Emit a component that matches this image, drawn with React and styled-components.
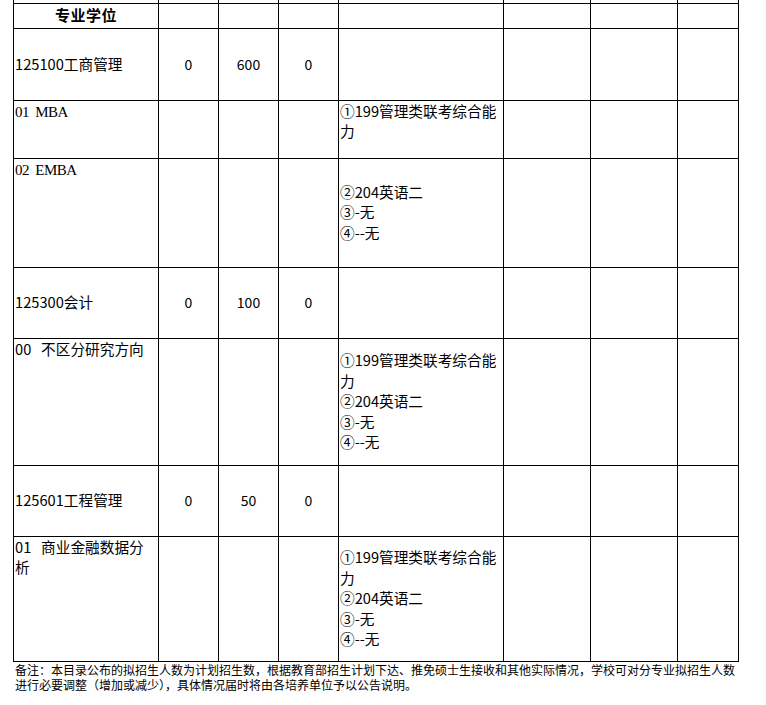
import React from "react";
import styled, { createGlobalStyle } from "styled-components";

const GlobalStyle = createGlobalStyle`
  html, body {
    margin: 0;
    padding: 0;
    background: #ffffff;
  }
  body {
    font-family: "Noto Sans CJK SC", "Liberation Sans", sans-serif;
    color: #000000;
  }
`;

const Page = styled.div`
  padding-left: 13px;
  width: 740px;
`;

const Table = styled.table`
  border-collapse: collapse;
  table-layout: fixed;
  width: 725px;
`;

const Row = styled.tr`
  height: ${(props) => props.$h}px;
`;

const Cell = styled.td`
  border: 1px solid #000000;
  border-top: ${(props) => (props.$open ? "none" : "1px solid #000000")};
  padding: ${(props) => (props.$open ? "0" : "0 1px")};
  font-size: 14.67px;
  line-height: 20.5px;
  text-align: ${(props) => (props.$center ? "center" : "left")};
  vertical-align: ${(props) => (props.$top ? "top" : "middle")};
  word-break: break-all;
  overflow: hidden;
`;

const HeadText = styled.span`
  font-weight: bold;
  font-size: 15px;
  letter-spacing: 0.5px;
`;

const Code = styled.span`
  font-family: "Liberation Serif", "DejaVu Serif", serif;
  font-size: 15px;
  letter-spacing: -0.5px;
  word-spacing: 3px;
`;

const Num = styled.span`
  font-size: 14px;
`;

const Note = styled.div`
  width: 722px;
  padding-left: 2px;
  font-size: 12px;
  line-height: 15px;
  font-family: "Noto Sans CJK SC", sans-serif;
`;

const widths = [145, 60, 60, 60, 165, 87, 87, 61];

const exams = ["②204英语二", "③-无", "④--无"];

const ExamLines = ({ full }) => (
  <>
    {full && <div>①199管理类联考综合能力</div>}
    {exams.map((e) => (
      <div key={e}>{e}</div>
    ))}
  </>
);

const Empty = ({ n = 3 }) =>
  Array.from({ length: n }).map((_, i) => <Cell key={i} />);

const MajorRow = ({ h, code, name, a, b, c }) => (
  <Row $h={h}>
    <Cell>
      {code}
      {name}
    </Cell>
    <Cell $center>
      <Num>{a}</Num>
    </Cell>
    <Cell $center>
      <Num>{b}</Num>
    </Cell>
    <Cell $center>
      <Num>{c}</Num>
    </Cell>
    <Empty n={4} />
  </Row>
);

const App = () => {
  return (
    <Page>
      <GlobalStyle />
      <Table>
        <colgroup>
          {widths.map((w, i) => (
            <col key={i} style={{ width: w }} />
          ))}
        </colgroup>
        <tbody>
          <Row $h={3}>
            {widths.map((_, i) => (
              <Cell key={i} $open />
            ))}
          </Row>
          <Row $h={25}>
            <Cell $center>
              <HeadText>专业学位</HeadText>
            </Cell>
            <Empty n={7} />
          </Row>
          <MajorRow h={72} code="125100" name="工商管理" a="0" b="600" c="0" />
          <Row $h={58}>
            <Cell $top>
              <Code>01 MBA</Code>
            </Cell>
            <Empty n={3} />
            <Cell $top>①199管理类联考综合能力</Cell>
            <Empty n={3} />
          </Row>
          <Row $h={109}>
            <Cell $top>
              <Code>02 EMBA</Code>
            </Cell>
            <Empty n={3} />
            <Cell>
              <ExamLines />
            </Cell>
            <Empty n={3} />
          </Row>
          <MajorRow h={71} code="125300" name="会计" a="0" b="100" c="0" />
          <Row $h={127}>
            <Cell $top>{"00\u00a0\u00a0\u00a0不区分研究方向"}</Cell>
            <Empty n={3} />
            <Cell>
              <ExamLines full />
            </Cell>
            <Empty n={3} />
          </Row>
          <MajorRow h={71} code="125601" name="工程管理" a="0" b="50" c="0" />
          <Row $h={125}>
            <Cell $top>{"01\u00a0\u00a0\u00a0商业金融数据分析"}</Cell>
            <Empty n={3} />
            <Cell>
              <ExamLines full />
            </Cell>
            <Empty n={3} />
          </Row>
        </tbody>
      </Table>
      <Note>
        备注：本目录公布的拟招生人数为计划招生数，根据教育部招生计划下达、推免硕士生接收和其他实际情况，学校可对分专业拟招生人数进行必要调整（增加或减少），具体情况届时将由各培养单位予以公告说明。
      </Note>
    </Page>
  );
};

export default App;
